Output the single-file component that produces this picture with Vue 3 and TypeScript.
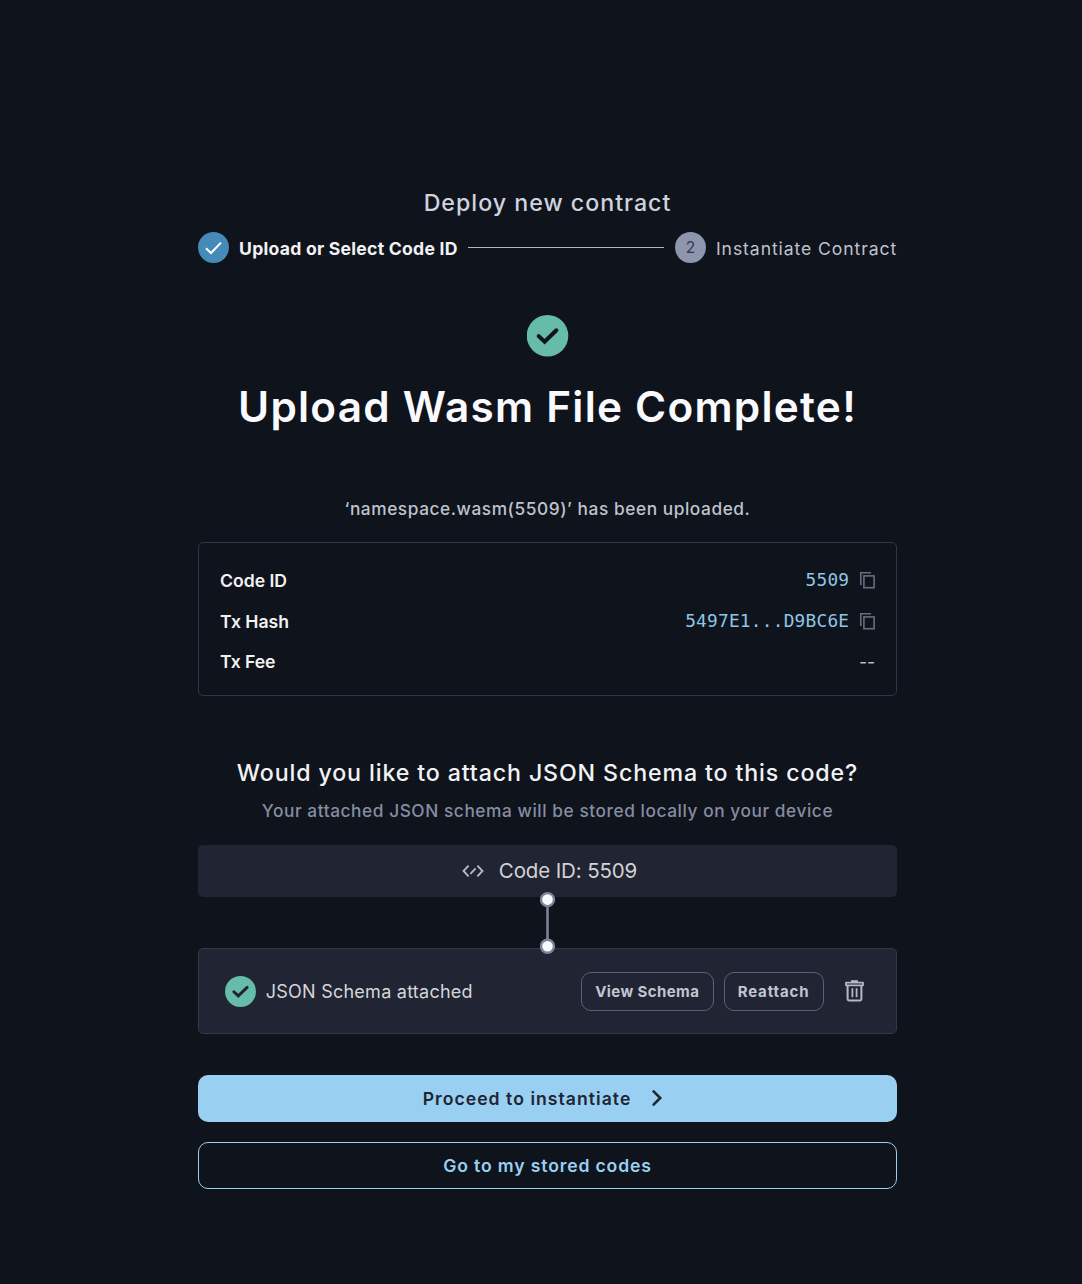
<script setup lang="ts">
interface Detail {
  label: string
  value: string
  copyable: boolean
  id: string
}

const details: Detail[] = [
  { id: 'code', label: 'Code ID', value: '5509', copyable: true },
  { id: 'hash', label: 'Tx Hash', value: '5497E1...D9BC6E', copyable: true },
  { id: 'fee', label: 'Tx Fee', value: '--', copyable: false },
]
</script>

<template>
  <main class="page">
    <div class="content">
      <p class="eyebrow"><span>Deploy new contract</span></p>

      <div class="stepper">
        <span class="step-dot done">
          <svg viewBox="0 0 31 31" width="31" height="31" fill="none">
            <path d="M8 16.2 L13 21 L23 10.6" stroke="#fff" stroke-width="2" />
          </svg>
        </span>
        <span class="step-label active">Upload or Select Code ID</span>
        <span class="step-line"></span>
        <span class="step-dot">2</span>
        <span class="step-label next">Instantiate Contract</span>
      </div>

      <svg class="success" viewBox="0 0 42 42" width="42" height="42" fill="none">
        <circle cx="20.5" cy="20.8" r="20.8" fill="#66bba9" />
        <path d="M11.7 21.1 L17.6 26.8 L29.4 15.3" stroke="#0f131b" stroke-width="4" stroke-linecap="round" />
      </svg>

      <h1 class="title"><span>Upload Wasm File Complete!</span></h1>
      <p class="uploaded"><span>‘namespace.wasm(5509)’ has been uploaded.</span></p>

      <dl class="details">
        <div v-for="d in details" :key="d.id" class="row" :class="d.id">
          <dt>{{ d.label }}</dt>
          <dd>
            <span :class="d.copyable ? 'link' : 'plain'">{{ d.value }}</span>
            <svg v-if="d.copyable" class="copy" viewBox="0 0 15 17" width="15" height="17" fill="none" stroke="#686e80" stroke-width="1.6">
              <path d="M0.8 13 V0.8 H11" />
              <rect x="3.9" y="3.9" width="10.2" height="11.8" />
            </svg>
          </dd>
        </div>
      </dl>

      <h2 class="question"><span>Would you like to attach JSON Schema to this code?</span></h2>
      <p class="hint"><span>Your attached JSON schema will be stored locally on your device</span></p>

      <div class="code-bar">
        <svg viewBox="0 0 22 14" width="22" height="14" fill="none" stroke="#b5b9c4" stroke-width="1.9">
          <path d="M6.6 1.6 L1.5 7 L6.6 12.4" />
          <path d="M15.4 1.6 L20.5 7 L15.4 12.4" />
          <path d="M8.4 9.8 L13.6 4.4" />
        </svg>
        <span>Code ID: 5509</span>
      </div>

      <div class="connector">
        <svg viewBox="0 0 16 64" width="16" height="64">
          <path d="M7.5 9 V55" stroke="#7c839a" stroke-width="2.6" />
          <circle cx="7.5" cy="8.6" r="6.5" fill="#fafafe" stroke="#7c839a" stroke-width="2.4" />
          <circle cx="7.5" cy="55.2" r="6.5" fill="#fafafe" stroke="#7c839a" stroke-width="2.4" />
        </svg>
      </div>

      <section class="schema">
        <svg viewBox="0 0 42 42" width="31" height="31" fill="none">
          <circle cx="21" cy="21" r="21" fill="#66bba9" />
          <path d="M12 21.3 L18 27 L30 15.5" stroke="#202433" stroke-width="4" stroke-linecap="round" />
        </svg>
        <span class="schema-label">JSON Schema attached</span>
        <button type="button" class="small view"><span>View Schema</span></button>
        <button type="button" class="small reattach"><span>Reattach</span></button>
        <svg class="trash" viewBox="0 0 19 22" width="19" height="22" fill="none" stroke="#b5b9c4">
          <path d="M6 1.2 H13" stroke-width="2" />
          <path d="M1 2.7 H18 V5.3 H1 Z" stroke-width="1.8" stroke-linejoin="round" />
          <path d="M2.6 5.5 V19 Q2.6 20.4 4 20.4 H15 Q16.4 20.4 16.4 19 V5.5" stroke-width="2" />
          <path d="M7.4 8.2 V17.2 M11.6 8.2 V17.2" stroke-width="1.8" />
        </svg>
      </section>

      <button type="button" class="cta primary">
        <span>Proceed to instantiate</span>
        <svg viewBox="0 0 12 18" width="12" height="18" fill="none">
          <path d="M2.6 2.4 L9.2 9 L2.6 15.6" stroke="#202433" stroke-width="2.6" stroke-linecap="round" />
        </svg>
      </button>
      <button type="button" class="cta outline"><span>Go to my stored codes</span></button>
    </div>
  </main>
</template>

<style>
body {
  margin: 0;
  background: #0f131b;
}
</style>

<style scoped>
* {
  box-sizing: border-box;
}
.page {
  min-height: 1284px;
  padding: 189px 185px 0 198px;
  background: #0f131b;
  color: #f2f2f4;
  font-family: Inter, "Liberation Sans", sans-serif;
  white-space: nowrap;
}
.content {
  display: flex;
  flex-direction: column;
  width: 699px;
}
p,
h1,
h2,
dl,
dd {
  margin: 0;
}
button {
  font-family: inherit;
  margin: 0;
  padding: 0;
  background: none;
}
.eyebrow,
.title,
.uploaded,
.question,
.hint {
  display: flex;
  justify-content: center;
}
.eyebrow {
  height: 28px;
  line-height: 28px;
  font-size: 23.2px;
  font-weight: 450;
  color: #cfd2df;
  letter-spacing: 1px;
}
.stepper {
  display: flex;
  align-items: center;
  height: 31px;
  margin-top: 15px;
  font-size: 17.6px;
}
.step-dot {
  display: flex;
  flex: none;
  align-items: center;
  justify-content: center;
  width: 31px;
  height: 31px;
  border-radius: 50%;
  background: #8d96ac;
  color: #343a4b;
  font-size: 15.5px;
}
.step-dot.done {
  background: #458ab9;
}
.step-label {
  padding-top: 1px;
}
.step-label.active {
  width: 219px;
  margin-left: 10px;
  font-weight: 700;
  letter-spacing: 0.25px;
}
.step-line {
  flex: 1;
  height: 1.5px;
  margin: 0 11px 0 10px;
  background: #b2b5c2;
}
.step-label.next {
  width: 181px;
  margin-left: 10px;
  color: #bfc2ce;
  letter-spacing: 0.9px;
}
.success {
  align-self: center;
  margin-top: 52px;
}
.title {
  height: 60px;
  margin-top: 20px;
  line-height: 60px;
  font-size: 42.3px;
  font-weight: 600;
  letter-spacing: 1.25px;
  color: #fafafe;
}
.uploaded {
  height: 24px;
  margin-top: 60px;
  line-height: 24px;
  font-size: 17.3px;
  font-weight: 500;
  letter-spacing: 0.56px;
  color: #bfc2ce;
}
.details {
  height: 154px;
  margin-top: 21px;
  padding: 26px 21px 0;
  border: 1.3px solid #2f3646;
  border-radius: 5px;
}
.row {
  display: flex;
  align-items: center;
  justify-content: space-between;
  height: 22px;
  margin-bottom: 19px;
  font-size: 17.6px;
}
.row.fee dt {
  letter-spacing: -0.1px;
}
.row.hash {
  margin-bottom: 18px;
}
dt {
  font-weight: 600;
}
dd {
  display: flex;
  align-items: center;
}
.link {
  font-family: "DejaVu Sans Mono", "Liberation Mono", monospace;
  font-size: 17.8px;
  line-height: 22px;
  letter-spacing: 0.24px;
  color: #8fc5e6;
}
.plain {
  font-size: 17.6px;
  color: #bfc0c4;
  letter-spacing: -0.1px;
}
.copy {
  margin-left: 10.7px;
}
.question {
  height: 32px;
  margin-top: 61px;
  line-height: 32px;
  font-size: 23.2px;
  font-weight: 500;
  letter-spacing: 0.87px;
}
.hint {
  height: 24px;
  margin-top: 10px;
  line-height: 24px;
  font-size: 17.3px;
  font-weight: 500;
  letter-spacing: 0.56px;
  color: #858da3;
}
.code-bar {
  display: flex;
  align-items: center;
  justify-content: center;
  gap: 15px;
  height: 52px;
  margin-top: 22px;
  padding: 0 0 1px 4px;
  border-radius: 5px;
  background: #202433;
  color: #d2d2d5;
  font-size: 20.5px;
  letter-spacing: -0.13px;
}
.connector {
  position: relative;
  display: flex;
  justify-content: center;
  height: 64px;
  margin: -6px 0 -7px;
}
.schema {
  display: flex;
  align-items: center;
  height: 86px;
  padding: 0 32px 0 25.7px;
  border: 1.3px solid #30394a;
  border-radius: 5px;
  background: #202433;
}
.schema-label {
  flex: 1;
  margin-left: 10px;
  font-size: 18px;
  letter-spacing: 0.25px;
  color: #d6d6d9;
}
.small {
  height: 39px;
  border: 1.4px solid #5b6278;
  border-radius: 10px;
  color: #c2c5d2;
  font-size: 15px;
  font-weight: 700;
}
.view {
  width: 132.5px;
  letter-spacing: 0.4px;
}
.reattach {
  width: 100px;
  margin-left: 10px;
  letter-spacing: 0.85px;
}
.trash {
  margin-left: 21.5px;
}
.cta {
  display: flex;
  align-items: center;
  justify-content: center;
  height: 47px;
  border-radius: 10px;
  font-size: 17.6px;
  font-weight: 600;
}
.primary {
  margin-top: 41px;
  gap: 20px;
  padding: 0 9px 1px 0;
  border: 0;
  background: #99d0f2;
  color: #202433;
  letter-spacing: 1.04px;
}
.outline {
  margin-top: 20px;
  border: 1.4px solid #99d0f2;
  color: #99d0f2;
  letter-spacing: 0.85px;
}
</style>
